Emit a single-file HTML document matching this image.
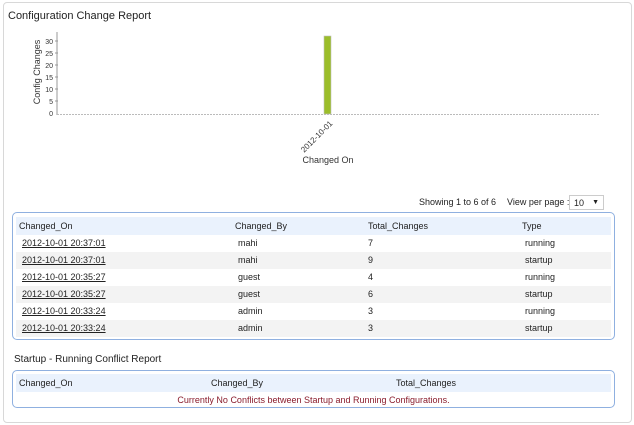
<!DOCTYPE html>
<html><head><style>
*{margin:0;padding:0;box-sizing:border-box}
body{width:634px;height:425px;background:#fff;font-family:"Liberation Sans",Arial,sans-serif;font-size:9px;color:#222;position:relative;overflow:hidden}
.a{position:absolute;white-space:nowrap}
.panel{position:absolute;left:3px;top:2px;width:629px;height:421px;border:1px solid #d8d8d8;border-radius:4px}
.box{position:absolute;left:12px;width:603px;border:1px solid #8fb0e0;border-radius:5px;overflow:hidden;background:#fff}
.row{position:absolute;left:3px;right:3px;height:17px}
.hd{background:#eaf2fd}
.g{background:#f3f3f3}
u{text-decoration:underline}
</style></head><body>
<div class="panel"></div>
<div class="a" style="left:8px;top:10px;font-size:11px;color:#222">Configuration Change Report</div>
<svg class="a" style="left:0;top:0" width="634" height="170">
<line x1="57" y1="32" x2="57" y2="115" stroke="#999" stroke-width="1"/>
<line x1="57" y1="114.5" x2="600" y2="114.5" stroke="#bbb" stroke-dasharray="2,1"/>
<g font-family="Liberation Sans" font-size="7" fill="#333" text-anchor="end">
<text x="53" y="44">30</text><text x="53" y="56">25</text><text x="53" y="68">20</text><text x="53" y="80">15</text><text x="53" y="92">10</text><text x="53" y="104">5</text><text x="53" y="116">0</text>
</g>
<g stroke="#999"><line x1="55" y1="41" x2="58" y2="41"/><line x1="55" y1="53" x2="58" y2="53"/><line x1="55" y1="65" x2="58" y2="65"/><line x1="55" y1="77" x2="58" y2="77"/><line x1="55" y1="89" x2="58" y2="89"/><line x1="55" y1="101" x2="58" y2="101"/></g>
<rect x="324" y="36" width="7" height="78" fill="#9bbd2a" stroke="#c0c0c0" stroke-width="0.6"/>
<text x="40" y="72" font-family="Liberation Sans" font-size="9" fill="#333" text-anchor="middle" transform="rotate(-90 40 72)">Config Changes</text>
<text x="333" y="124" font-family="Liberation Sans" font-size="8" fill="#333" text-anchor="end" transform="rotate(-45 333 124)">2012-10-01</text>
<text x="328" y="163" font-family="Liberation Sans" font-size="9" fill="#333" text-anchor="middle">Changed On</text>
</svg>
<div class="a" style="left:419px;top:197px">Showing 1 to 6 of 6</div>
<div class="a" style="left:507px;top:197px">View per page :</div>
<div class="a" style="left:569px;top:195px;width:35px;height:15px;border:1px solid #ccc;background:#fff;padding:2px 0 0 4px;font-size:9px">10<span style="position:absolute;right:4px;top:3px;font-size:7px">&#9660;</span></div>
<div class="box" style="top:212px;height:128px">
<div class="row hd" style="top:4px;height:18px"></div>
<div class="row g" style="top:39px"></div>
<div class="row g" style="top:73px"></div>
<div class="row g" style="top:107px"></div>
<div class="a" style="left:6px;top:8px">Changed_On</div><div class="a" style="left:222px;top:8px">Changed_By</div><div class="a" style="left:355px;top:8px">Total_Changes</div><div class="a" style="left:509px;top:8px">Type</div>
<div class="a" style="left:9px;top:25px"><u>2012-10-01 20:37:01</u></div><div class="a" style="left:225px;top:25px">mahi</div><div class="a" style="left:355px;top:25px">7</div><div class="a" style="left:512px;top:25px">running</div>
<div class="a" style="left:9px;top:42px"><u>2012-10-01 20:37:01</u></div><div class="a" style="left:225px;top:42px">mahi</div><div class="a" style="left:355px;top:42px">9</div><div class="a" style="left:512px;top:42px">startup</div>
<div class="a" style="left:9px;top:59px"><u>2012-10-01 20:35:27</u></div><div class="a" style="left:225px;top:59px">guest</div><div class="a" style="left:355px;top:59px">4</div><div class="a" style="left:512px;top:59px">running</div>
<div class="a" style="left:9px;top:76px"><u>2012-10-01 20:35:27</u></div><div class="a" style="left:225px;top:76px">guest</div><div class="a" style="left:355px;top:76px">6</div><div class="a" style="left:512px;top:76px">startup</div>
<div class="a" style="left:9px;top:93px"><u>2012-10-01 20:33:24</u></div><div class="a" style="left:225px;top:93px">admin</div><div class="a" style="left:355px;top:93px">3</div><div class="a" style="left:512px;top:93px">running</div>
<div class="a" style="left:9px;top:110px"><u>2012-10-01 20:33:24</u></div><div class="a" style="left:225px;top:110px">admin</div><div class="a" style="left:355px;top:110px">3</div><div class="a" style="left:512px;top:110px">startup</div>
</div>
<div class="a" style="left:14px;top:354px;font-size:10px">Startup - Running Conflict Report</div>
<div class="box" style="top:370px;height:38px">
<div class="row hd" style="top:3px;height:18px"></div>
<div class="a" style="left:6px;top:7px">Changed_On</div><div class="a" style="left:198px;top:7px">Changed_By</div><div class="a" style="left:383px;top:7px">Total_Changes</div>
<div class="a" style="left:0;right:0;top:24px;text-align:center;color:#8a1c2c">Currently No Conflicts between Startup and Running Configurations.</div>
</div>
</body></html>
